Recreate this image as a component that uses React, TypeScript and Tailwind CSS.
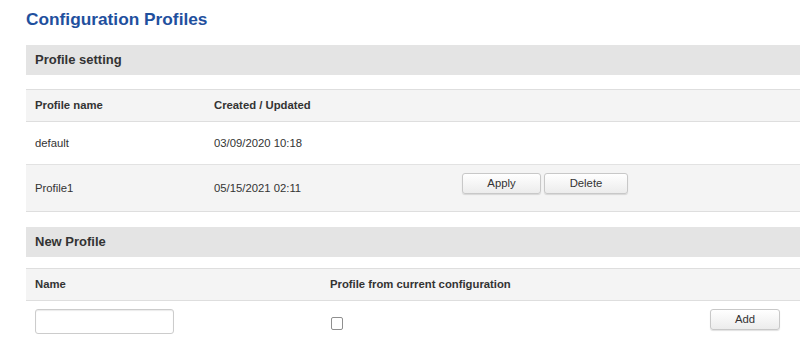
import React from "react";

const btn =
  "h-[21px] rounded-[3px] border border-[#c8c8c8] bg-gradient-to-b from-white to-[#ececec] text-[11.3px] text-[#333] shadow-[0_1px_1px_rgba(0,0,0,0.12)] flex items-center justify-center";

export default function App() {
  return (
    <div
      className="w-[800px] h-[346px] overflow-hidden bg-white text-[#333] pl-[26px]"
      style={{ fontFamily: '"Liberation Sans", Arial, sans-serif' }}
    >
      <div className="pt-[9px] h-[45px]">
        <h1 className="text-[17.3px] leading-[20px] font-bold text-[#1f509e]">
          Configuration Profiles
        </h1>
      </div>

      {/* Profile setting */}
      <div className="h-[30px] bg-[#e4e4e4] flex items-center pl-[9px] text-[13px] font-bold text-[#333]">
        Profile setting
      </div>
      <div className="h-[14px]" />
      <div className="grid grid-cols-[179px_248px_1fr] h-[33px] bg-[#f4f4f4] border-y border-[#dedede] items-center text-[11.3px] font-bold">
        <div className="pl-[9px]">Profile name</div>
        <div className="pl-[9px]">Created / Updated</div>
        <div />
      </div>
      <div className="grid grid-cols-[179px_248px_1fr] h-[43px] bg-white border-b border-[#e2e2e2] items-center text-[11.3px]">
        <div className="pl-[9px]">default</div>
        <div className="pl-[9px]">03/09/2020 10:18</div>
        <div />
      </div>
      <div className="grid grid-cols-[179px_248px_1fr] h-[47px] bg-[#f4f4f4] border-b border-[#dedede] items-center text-[11.3px]">
        <div className="pl-[9px]">Profile1</div>
        <div className="pl-[9px]">05/15/2021 02:11</div>
        <div className="self-start pt-[8px] pl-[9px] flex gap-[3px]">
          <button className={`${btn} w-[79px]`}>Apply</button>
          <button className={`${btn} w-[84px]`}>Delete</button>
        </div>
      </div>

      <div className="h-[15px]" />

      {/* New Profile */}
      <div className="h-[30px] bg-[#e4e4e4] flex items-center pl-[9px] text-[13px] font-bold text-[#333]">
        New Profile
      </div>
      <div className="h-[11px]" />
      <div className="grid grid-cols-[295px_388px_1fr] h-[33px] bg-[#f4f4f4] border-y border-[#dedede] items-center text-[11.3px] font-bold">
        <div className="pl-[9px]">Name</div>
        <div className="pl-[9px]">Profile from current configuration</div>
        <div />
      </div>
      <div className="grid grid-cols-[295px_388px_1fr] h-[50px] bg-white text-[11.3px]">
        <div className="pl-[9px] pt-[8px]">
          <input
            type="text"
            className="w-[139px] h-[25px] rounded-[3px] border border-[#cccccc] bg-white shadow-[inset_0_1px_1px_rgba(0,0,0,0.08)] outline-none px-1"
          />
        </div>
        <div className="pl-[10px] pt-[16px]">
          <input
            type="checkbox"
            className="appearance-none block w-[12px] h-[13px] border border-[#8f8f8f] rounded-[2px] bg-white"
          />
        </div>
        <div className="pt-[8px] pl-[1px]">
          <button className={`${btn} w-[70px] h-[20px]`}>Add</button>
        </div>
      </div>
    </div>
  );
}
